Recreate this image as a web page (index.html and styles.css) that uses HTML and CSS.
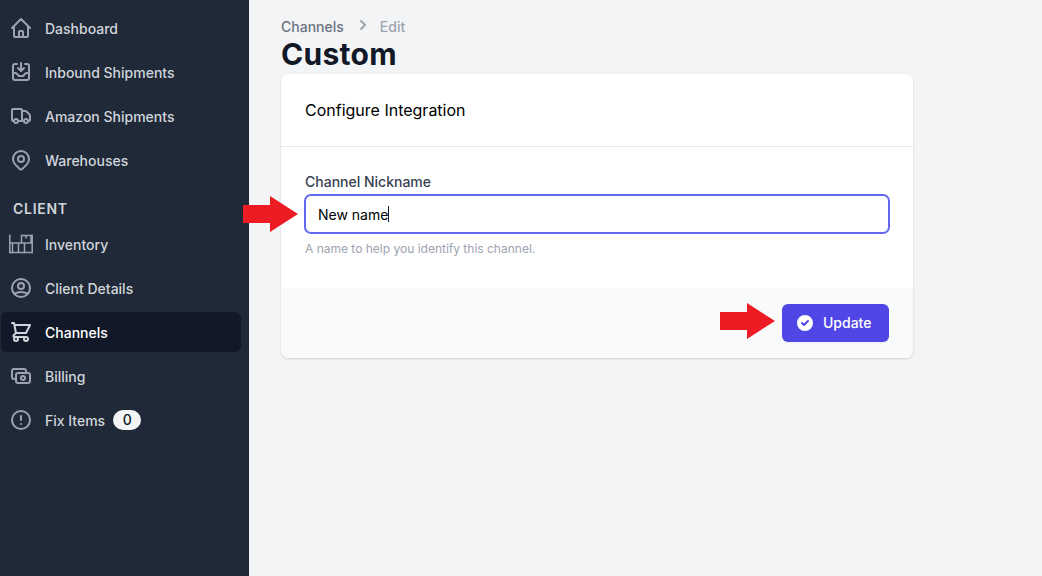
FILE: index.html
```html
<!DOCTYPE html>
<html lang="en">
<head>
<meta charset="utf-8">
<title>Custom</title>
<link rel="stylesheet" href="styles.css">
</head>
<body>
<div class="app">
  <nav class="sidebar">
    <a class="item"><svg class="icon" viewBox="0 0 24 24"><path d="M3 12l2-2m0 0l7-7 7 7M5 10v10a1 1 0 001 1h3m10-11l2 2m-2-2v10a1 1 0 01-1 1h-3m-6 0a1 1 0 001-1v-4a1 1 0 011-1h2a1 1 0 011 1v4a1 1 0 001 1m-6 0h6"/></svg><span>Dashboard</span></a>
    <a class="item"><svg class="icon" viewBox="0 0 24 24"><path d="M8 4H6a2 2 0 00-2 2v12a2 2 0 002 2h12a2 2 0 002-2V6a2 2 0 00-2-2h-2m-4-1v8m0 0l3-3m-3 3L9 8m-5 5h2.586a1 1 0 01.707.293l2.414 2.414a1 1 0 00.707.293h3.172a1 1 0 00.707-.293l2.414-2.414a1 1 0 01.707-.293H20"/></svg><span>Inbound Shipments</span></a>
    <a class="item"><svg class="icon" viewBox="0 0 24 24"><path d="M9 17a2 2 0 11-4 0 2 2 0 014 0zM19 17a2 2 0 11-4 0 2 2 0 014 0z"/><path d="M13 16V6a1 1 0 00-1-1H4a1 1 0 00-1 1v10a1 1 0 001 1h1m8-1a1 1 0 01-1 1H9m4-1V8a1 1 0 011-1h2.586a1 1 0 01.707.293l3.414 3.414a1 1 0 01.293.707V16a1 1 0 01-1 1h-1m-6-1a1 1 0 001 1h1"/></svg><span>Amazon Shipments</span></a>
    <a class="item"><svg class="icon" viewBox="0 0 24 24"><path d="M17.657 16.657L13.414 20.9a1.998 1.998 0 01-2.827 0l-4.244-4.243a8 8 0 1111.314 0z"/><path d="M15 11a3 3 0 11-6 0 3 3 0 016 0z"/></svg><span>Warehouses</span></a>
    <div class="section">CLIENT</div>
    <a class="item"><svg class="icon thin" viewBox="0 0 24 24"><path d="M.8 2.500v19M23.200 2.500v19M.8 11h22.400M.8 20.500h22.400M3.500 20.500V11M9.500 20.500V11M15.500 20.500V11M12.500 11V3.500h9.500V11M17 3.500v3"/></svg><span>Inventory</span></a>
    <a class="item"><svg class="icon" viewBox="0 0 24 24"><path d="M5.121 17.804A13.937 13.937 0 0112 16c2.5 0 4.847.655 6.879 1.804M15 10a3 3 0 11-6 0 3 3 0 016 0zm6 2a9 9 0 11-18 0 9 9 0 0118 0z"/></svg><span>Client Details</span></a>
    <a class="item active"><svg class="icon" viewBox="0 0 24 24"><path d="M3 3h2l.4 2M7 13h10l4-8H5.400M7 13L5.400 5M7 13l-2.293 2.293c-.63.63-.184 1.707.707 1.707H17m0 0a2 2 0 100 4 2 2 0 000-4zm-8 2a2 2 0 11-4 0 2 2 0 014 0z"/></svg><span>Channels</span></a>
    <a class="item"><svg class="icon" viewBox="0 0 24 24"><path d="M17 9V7a2 2 0 00-2-2H5a2 2 0 00-2 2v6a2 2 0 002 2h2m2 4h10a2 2 0 002-2v-6a2 2 0 00-2-2H9a2 2 0 00-2 2v6a2 2 0 002 2zm7-5a2 2 0 11-4 0 2 2 0 014 0z"/></svg><span>Billing</span></a>
    <a class="item"><svg class="icon" viewBox="0 0 24 24"><path d="M12 8v4m0 4h.01M21 12a9 9 0 11-18 0 9 9 0 0118 0z"/></svg><span>Fix Items</span><span class="badge">0</span></a>
  </nav>
  <main class="main">
    <div class="crumbs">
      <span>Channels</span>
      <svg class="chev" viewBox="0 0 20 20"><path d="M7.293 14.707a1 1 0 010-1.414L10.586 10 7.293 6.707a1 1 0 011.414-1.414l4 4a1 1 0 010 1.414l-4 4a1 1 0 01-1.414 0z"/></svg>
      <span class="crumb-current">Edit</span>
    </div>
    <h1 class="title">Custom</h1>
    <section class="card">
      <header class="card-head">Configure Integration</header>
      <div class="card-body">
        <label class="label">Channel Nickname</label>
        <div class="input"><span>New name</span><i class="caret"></i></div>
        <p class="help">A name to help you identify this channel.</p>
      </div>
      <footer class="card-foot">
        <button class="btn"><svg class="btn-icon" viewBox="0 0 20 20"><path fill-rule="evenodd" d="M10 18a8 8 0 100-16 8 8 0 000 16zm3.707-9.293a1 1 0 00-1.414-1.414L9 10.586 7.707 9.293a1 1 0 00-1.414 1.414l2 2a1 1 0 001.414 0l4-4z"/></svg>Update</button>
      </footer>
    </section>
  </main>
</div>
<svg class="arrow arrow-input" viewBox="0 0 55 36"><path d="M0 9h27V0l28 18-28 18v-9H0z"/></svg>
<svg class="arrow arrow-btn" viewBox="0 0 55 36"><path d="M0 9h27V0l28 18-28 18v-9H0z"/></svg>
</body>
</html>
```
FILE: styles.css
```css
* { box-sizing: border-box; }
html, body { margin: 0; height: 100%; }
body { font-family: Inter, "Liberation Sans", sans-serif; background: #f3f4f6; overflow: hidden; }
.app { display: flex; height: 576px; }
.sidebar { width: 249px; flex: none; background: #1f2937; padding: 8px 8px 0 1px; display: flex; flex-direction: column; gap: 4px; }
.item { display: flex; align-items: center; height: 40px; padding: 2px 8px 0; border-radius: 6px; font-size: 14px; font-weight: 500; line-height: 20px; color: #d1d5db; }
.item.active { background: #111827; color: #fff; }
.icon { width: 24px; height: 24px; margin: 0 12px 2px 0; flex: none; fill: none; stroke: #9ca3af; stroke-width: 2; stroke-linecap: round; stroke-linejoin: round; }
.icon.thin { stroke-width: 1.5; stroke-linecap: butt; stroke-linejoin: miter; }
.active .icon { stroke: #d1d5db; }
.section { height: 36px; padding: 13px 0 0 12px; font-size: 14px; font-weight: 600; letter-spacing: .7px; color: #d1d5db; display: flex; align-items: center; }
.badge { margin: 0 0 2px 8px; width: 28px; height: 20px; border-radius: 10px; background: #f3f4f6; color: #111827; font-size: 14px; line-height: 20px; text-align: center; }
.main { flex: 1; padding: 16px 0 0 32px; }
.crumbs { display: flex; align-items: center; height: 20px; font-size: 14px; font-weight: 500; color: #6b7280; }
.chev { width: 20px; height: 20px; margin: 0 7px 2px 9px; fill: #9ca3af; }
.crumb-current { color: #9ca3af; }
.title { margin: 0; height: 38px; font-size: 30px; line-height: 36px; font-weight: 700; letter-spacing: .3px; color: #111827; }
.card { width: 632px; background: #fff; border-radius: 8px; overflow: hidden; box-shadow: 0 1px 3px rgba(0,0,0,.1), 0 1px 2px rgba(0,0,0,.06); }
.card-head { height: 73px; padding: 0 24px; display: flex; align-items: center; border-bottom: 1px solid #e5e7eb; font-size: 16px; color: #000; }
.card-body { height: 141px; padding: 25px 24px 0; }
.label { display: block; font-size: 14px; line-height: 20px; font-weight: 500; color: #374151; }
.input { display: flex; align-items: center; height: 38px; margin-top: 3px; padding: 0 12px; border: 1px solid #6366f1; box-shadow: 0 0 0 1px #6366f1; border-radius: 6px; font-size: 14px; color: #000; background: #fff; }
.caret { width: 1px; height: 16px; background: #111827; }
.help { margin: 8px 0 0; font-size: 12px; line-height: 16px; color: #9ca3af; }
.card-foot { height: 70px; padding: 16px 24px; background: #f9fafb; display: flex; justify-content: flex-end; align-items: flex-start; }
.btn { display: flex; align-items: center; width: 107px; height: 38px; padding: 0 0 0 13px; border: 0; border-radius: 6px; background: #4f46e5; color: #fff; font: 500 14px/20px Inter, "Liberation Sans", sans-serif; box-shadow: 0 1px 2px rgba(0,0,0,.05); }
.btn-icon { width: 20px; height: 20px; margin-right: 8px; fill: #fff; }
.arrow { position: absolute; width: 55px; height: 36px; fill: #ed1c24; }
.arrow-input { left: 243px; top: 196px; }
.arrow-btn { left: 720px; top: 303px; }
```
